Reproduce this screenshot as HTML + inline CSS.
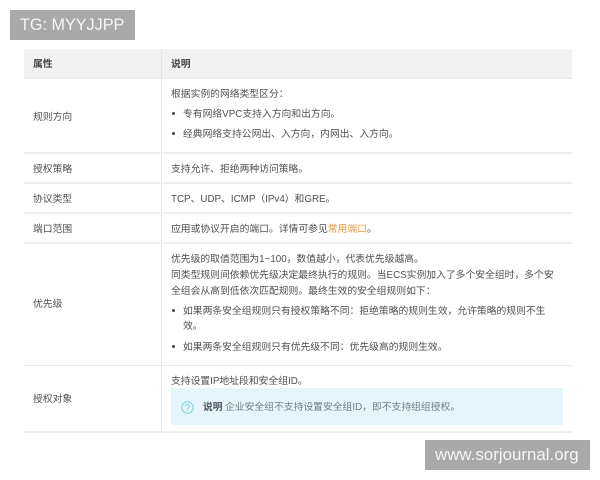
<!DOCTYPE html>
<html lang="zh"><head><meta charset="utf-8"><style>
html,body{margin:0;padding:0;background:#fff}
#p{position:relative;width:600px;height:480px;overflow:hidden;background:#fff;font-family:"Liberation Sans","WenQuanYi Zen Hei","Noto Sans CJK SC",sans-serif}
.t{position:absolute;font-size:9.8px;line-height:14px;height:14px;color:#505050;white-space:nowrap;filter:blur(.35px);margin-top:2px}
.l{position:absolute;left:24px;width:548px;height:1px;background:#e8e8e8}
.d{position:absolute;width:3px;height:3px;border-radius:50%;background:#444;left:172px}
.w{position:absolute;background:#a9a9a9;color:#f5f5f5;white-space:nowrap;filter:blur(.3px)}
</style></head><body><div id="p">
<div style="position:absolute;left:24px;top:49px;width:548px;height:29px;background:#f2f2f2"></div>
<div style="position:absolute;left:161px;top:49px;width:1px;height:383px;background:#e4e4e4"></div>
<div class="l" style="top:78px"></div>
<div class="l" style="top:152px;height:2px;background:#eeeeee"></div>
<div class="l" style="top:182px;height:2px;background:#eeeeee"></div>
<div class="l" style="top:212px;height:2px;background:#eeeeee"></div>
<div class="l" style="top:242px;height:2px;background:#eeeeee"></div>
<div class="l" style="top:365px"></div>
<div class="l" style="top:431px;height:2px;background:#eeeeee"></div>

<div class="t" style="left:33px;top:56px;font-weight:bold;color:#444">属性</div>
<div class="t" style="left:171px;top:56px;font-weight:bold;color:#444">说明</div>

<div class="t" style="left:33px;top:109px">规则方向</div>
<div class="t" style="left:171px;top:86px">根据实例的网络类型区分：</div>
<div class="d" style="top:112px"></div>
<div class="t" style="left:183px;top:106px">专有网络VPC支持入方向和出方向。</div>
<div class="d" style="top:132px"></div>
<div class="t" style="left:183px;top:126px">经典网络支持公网出、入方向，内网出、入方向。</div>

<div class="t" style="left:33px;top:161px">授权策略</div>
<div class="t" style="left:171px;top:161px">支持允许、拒绝两种访问策略。</div>

<div class="t" style="left:33px;top:191px">协议类型</div>
<div class="t" style="left:171px;top:191px">TCP、UDP、ICMP（IPv4）和GRE。</div>

<div class="t" style="left:33px;top:221px">端口范围</div>
<div class="t" style="left:171px;top:221px">应用或协议开启的端口。详情可参见<span style="color:#e59a4c">常用端口</span>。</div>

<div class="t" style="left:33px;top:296px">优先级</div>
<div class="t" style="left:171px;top:251px">优先级的取值范围为1~100，数值越小，代表优先级越高。</div>
<div class="t" style="left:171px;top:267px">同类型规则间依赖优先级决定最终执行的规则。当ECS实例加入了多个安全组时，多个安</div>
<div class="t" style="left:171px;top:283px">全组会从高到低依次匹配规则。最终生效的安全组规则如下：</div>
<div class="d" style="top:309px"></div>
<div class="t" style="left:183px;top:303px">如果两条安全组规则只有授权策略不同：拒绝策略的规则生效，允许策略的规则不生</div>
<div class="t" style="left:183px;top:318px">效。</div>
<div class="d" style="top:345px"></div>
<div class="t" style="left:183px;top:339px">如果两条安全组规则只有优先级不同：优先级高的规则生效。</div>

<div class="t" style="left:33px;top:391px">授权对象</div>
<div class="t" style="left:171px;top:373px">支持设置IP地址段和安全组ID。</div>
<div style="position:absolute;left:171px;top:388px;width:392px;height:37px;background:#e4f6fb"></div>
<svg style="position:absolute;left:180px;top:400px" width="15" height="15" viewBox="0 0 15 15"><circle cx="7.5" cy="7.5" r="5.7" fill="none" stroke="#86d0e2" stroke-width="1"/><path d="M5.6 6.1a1.9 1.9 0 1 1 2.9 1.6c-.7.4-1 .8-1 1.5" fill="none" stroke="#86d0e2" stroke-width="1"/><circle cx="7.5" cy="10.6" r=".6" fill="#86d0e2"/></svg>
<div class="t" style="left:203px;top:399px;font-weight:bold;color:#4c5a5e">说明</div>
<div class="t" style="left:225px;top:399px;color:#6d7f85">企业安全组不支持设置安全组ID，即不支持组组授权。</div>

<div class="w" style="left:10px;top:10px;width:115px;height:30px;padding-left:10px;font-size:16.2px;line-height:30px">TG: MYYJJPP</div>
<div class="w" style="left:425px;top:440px;width:155px;height:30px;padding-left:10px;font-size:16.9px;line-height:30px">www.sorjournal.org</div>
</div></body></html>
